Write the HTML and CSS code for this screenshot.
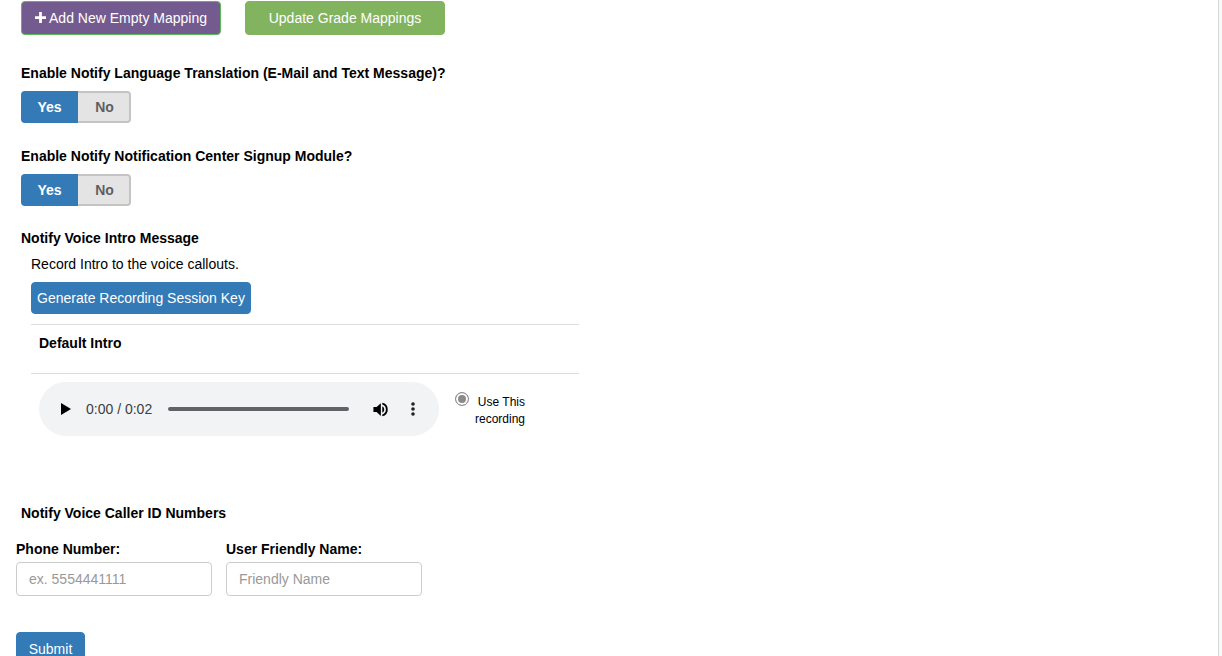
FILE: index.html
```html
<!DOCTYPE html>
<html lang="en">
<head>
  <meta charset="UTF-8" />
  <title>Notify Settings</title>
  <link rel="stylesheet" href="styles.css">
</head>
<body>
  <div class="page">
    <div class="top-actions">
      <button class="btn btn-purple" type="button"><svg class="plus-icon" viewBox="0 0 12 12" aria-hidden="true"><path d="M4.5 0h3v4.5H12v3H7.5V12h-3V7.5H0v-3h4.5z"/></svg>Add New Empty Mapping</button>
      <button class="btn btn-green" type="button">Update Grade Mappings</button>
    </div>

    <section class="setting">
      <h4 class="setting-title">Enable Notify Language Translation (E-Mail and Text Message)?</h4>
      <div class="toggle"><span class="toggle-yes">Yes</span><span class="toggle-no">No</span></div>
    </section>

    <section class="setting">
      <h4 class="setting-title">Enable Notify Notification Center Signup Module?</h4>
      <div class="toggle"><span class="toggle-yes">Yes</span><span class="toggle-no">No</span></div>
    </section>

    <section class="voice-intro">
      <h4 class="voice-title">Notify Voice Intro Message</h4>
      <div class="voice-body">
        <p class="voice-help">Record Intro to the voice callouts.</p>
        <button class="btn btn-blue btn-key" type="button">Generate Recording Session Key</button>
        <div class="intro-name">Default Intro</div>
        <div class="intro-row">
          <div class="player">
            <svg class="play-icon" viewBox="0 0 10 12" aria-hidden="true"><path d="M0 0l10 6-10 6z"/></svg>
            <span class="player-time">0:00 / 0:02</span>
            <div class="player-track"></div>
            <svg class="volume-icon" viewBox="0 0 24 24" aria-hidden="true"><path d="M2 8.5v7h4.5l6 5.5V3L6.500 8.500H2zm12.500-1v9a5 5 0 0 0 0-9zM14.500 2.500v2.600a7.200 7.200 0 0 1 0 13.800v2.600a9.700 9.700 0 0 0 0-19z"/></svg>
            <svg class="more-icon" viewBox="0 0 4 14" aria-hidden="true"><circle cx="2" cy="2" r="1.800"/><circle cx="2" cy="7" r="1.800"/><circle cx="2" cy="12" r="1.800"/></svg>
          </div>
          <label class="use-recording">
            <span class="radio-mark"></span>
            <span class="use-text">Use This<br>recording</span>
          </label>
        </div>
      </div>
    </section>

    <section class="caller-id">
      <h4 class="voice-title">Notify Voice Caller ID Numbers</h4>
      <div class="caller-fields">
        <div class="field">
          <label class="field-label">Phone Number:</label>
          <input class="field-input" type="text" placeholder="ex. 5554441111">
        </div>
        <div class="field">
          <label class="field-label">User Friendly Name:</label>
          <input class="field-input" type="text" placeholder="Friendly Name">
        </div>
      </div>
      <button class="btn btn-blue btn-submit" type="button">Submit</button>
    </section>
  </div>
</body>
</html>
```

FILE: styles.css
```css
html, body {
  margin: 0;
  height: 100%;
  overflow: hidden;
}

body {
  font-family: "Liberation Sans", Arial, sans-serif;
  font-size: 14px;
  line-height: 20px;
  color: #000;
  background: #f8f9f9;
}

.page {
  box-sizing: border-box;
  width: 1219px;
  height: 656px;
  overflow: hidden;
  background: #fff;
  border-right: 1px solid #d5d8d8;
  padding: 1px 0 0 16px;
}

.btn {
  box-sizing: border-box;
  border: 1px solid transparent;
  border-radius: 4px;
  font-family: inherit;
  font-size: 14px;
  line-height: 20px;
  color: #fff;
  padding: 6px;
  cursor: pointer;
}

.btn-purple {
  background: #745b8f;
  border-color: #5cb85c;
}

.btn-green {
  background: #82b460;
  border-color: #82b460;
}

.btn-blue {
  background: #337ab7;
  border-color: #337ab7;
}

.top-actions {
  display: flex;
  gap: 24px;
  padding-left: 5px;
}

.top-actions .btn {
  width: 200px;
  height: 34px;
}

.plus-icon {
  width: 11px;
  height: 11px;
  margin-right: 3px;
  fill: #fff;
}

.setting {
  padding-left: 5px;
  margin-top: 28px;
}

.setting + .setting {
  margin-top: 23px;
}

.setting-title,
.voice-title {
  margin: 0;
  font-size: 14px;
  line-height: 20px;
  font-weight: 700;
}

.toggle {
  display: flex;
  width: 110px;
  height: 32px;
  margin-top: 8px;
  font-weight: 700;
  line-height: 32px;
  text-align: center;
}

.toggle-yes {
  width: 57px;
  background: #337ab7;
  color: #fff;
  border-radius: 4px 0 0 4px;
}

.toggle-no {
  box-sizing: border-box;
  width: 53px;
  padding-left: 2px;
  line-height: 28px;
  background: #e4e4e4;
  color: #5f5f5f;
  border: 2px solid #c4c4c4;
  border-left: 0;
  border-radius: 0 4px 4px 0;
}

.voice-intro {
  padding-left: 5px;
  margin-top: 22px;
}

.voice-body {
  width: 548px;
  margin-left: 10px;
}

.voice-help {
  margin: 6px 0 8px;
}

.btn-key {
  display: block;
  width: 220px;
  height: 32px;
  padding: 0;
  line-height: 30px;
}

.intro-name {
  box-sizing: border-box;
  height: 50px;
  margin-top: 10px;
  padding: 8px 8px 0;
  border-top: 1px solid #ddd;
  border-bottom: 1px solid #ddd;
  font-weight: 700;
}

.intro-row {
  display: flex;
  margin-top: 8px;
  padding-left: 8px;
}

.player {
  display: flex;
  align-items: center;
  width: 400px;
  height: 54px;
  box-sizing: border-box;
  padding-left: 22px;
  border-radius: 27px;
  background: #f1f3f4;
}

.play-icon {
  width: 10px;
  height: 12px;
  fill: #000;
}

.player-time {
  margin-left: 15px;
  font-size: 14px;
  color: #3c4043;
}

.player-track {
  width: 181px;
  height: 4px;
  margin-left: 16px;
  border-radius: 2px;
  background: #5f6368;
}

.volume-icon {
  width: 17px;
  height: 17px;
  margin-left: 23px;
  fill: #000;
}

.more-icon {
  width: 4px;
  height: 14px;
  margin-left: 22px;
  fill: #202124;
}

.use-recording {
  display: flex;
  width: 100px;
  margin-left: 16px;
  font-size: 12px;
  line-height: 17px;
  padding-top: 10px;
}

.radio-mark {
  box-sizing: border-box;
  flex: none;
  width: 14px;
  height: 14px;
  border: 1px solid #8f8f8f;
  border-radius: 50%;
  background: #8a8a8a;
  box-shadow: inset 0 0 0 2px #fff;
}

.use-text {
  width: 56px;
  padding-top: 2px;
  text-align: right;
}

.caller-id {
  margin-top: 67px;
}

.caller-id .voice-title {
  padding-left: 5px;
}

.caller-fields {
  display: flex;
  gap: 14px;
  margin-top: 16px;
}

.field {
  width: 196px;
}

.field-label {
  display: block;
  font-weight: 700;
  margin-bottom: 3px;
}

.field-input {
  box-sizing: border-box;
  display: block;
  width: 196px;
  height: 34px;
  padding: 6px 12px;
  border: 1px solid #ccc;
  border-radius: 4px;
  font-family: inherit;
  font-size: 14px;
  color: #555;
}

.field-input::placeholder {
  color: #999;
}

.btn-submit {
  display: block;
  margin-top: 36px;
  width: 69px;
  height: 34px;
}
```
